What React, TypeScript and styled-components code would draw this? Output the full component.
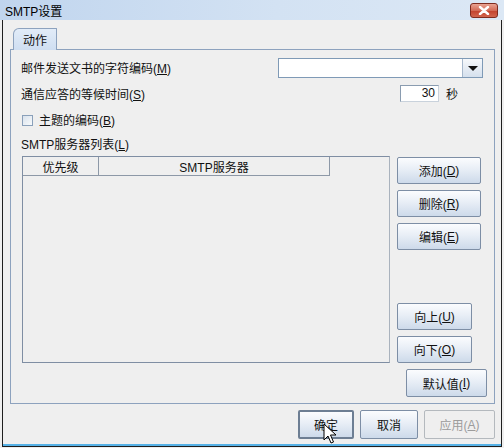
import styled, { createGlobalStyle } from 'styled-components';

const GlobalStyle = createGlobalStyle`
  html, body {
    margin: 0;
    padding: 0;
    background: #efefef;
  }
  body {
    font-family: "Liberation Sans", "Noto Sans CJK SC", sans-serif;
    font-size: 12px;
    color: #111;
  }
`;

const Window = styled.div`
  position: relative;
  width: 504px;
  height: 448px;
  display: flex;
  flex-direction: column;
  background: #efefef;
  overflow: hidden;
`;

const TitleBar = styled.div`
  height: 20px;
  flex: none;
  display: flex;
  align-items: center;
  justify-content: space-between;
  padding: 0 6px 0 5px;
  background: linear-gradient(to right, #c0d5ee, #d3e2f3 55%, #dce8f5);
`;

const Title = styled.span`
  font-size: 12px;
  color: #000;
`;

const CloseButton = styled.div`
  width: 28px;
  height: 15px;
  margin-top: 1px;
  box-sizing: border-box;
  border: 1px solid #7e2b1f;
  border-radius: 3px;
  background: linear-gradient(#e9a392, #d36b57 50%, #c2412c 51%, #d2654e);
  display: flex;
  align-items: center;
  justify-content: center;
`;

const Frame = styled.div`
  flex: 1;
  margin: 0 2px 1px 2px;
  border-left: 1px solid #1e1e1e;
  border-right: 1px solid #1e1e1e;
  border-bottom: 1px solid #1e1e1e;
  box-shadow: inset 0 -2px 0 #57b2e7;
  padding: 8px 6px 0 7px;
  display: flex;
  flex-direction: column;
`;

const TabStrip = styled.div`
  height: 21px;
  display: flex;
  padding-left: 3px;
`;

const Tab = styled.div`
  position: relative;
  z-index: 1;
  width: 44px;
  height: 22px;
  box-sizing: border-box;
  border: 1px solid #8da2be;
  border-bottom: none;
  border-radius: 6px 1px 0 0;
  background: linear-gradient(#e2ecf8, #cfdef1);
  display: flex;
  align-items: center;
  justify-content: center;
  font-size: 12px;
`;

const TabPanel = styled.div`
  height: 355px;
  box-sizing: border-box;
  border: 1px solid #8da2be;
  padding: 8px 11px 6px 10px;
  display: flex;
  flex-direction: column;
`;

const FormRow = styled.div<{ $h: number; $top?: number }>`
  height: ${p => p.$h}px;
  margin-top: ${p => p.$top ?? 0}px;
  display: flex;
  align-items: center;
  justify-content: space-between;
`;

const Label = styled.span`
  white-space: nowrap;
  line-height: 14px;
  padding-top: 2px;
`;

const Combo = styled.div`
  width: 205px;
  height: 20px;
  box-sizing: border-box;
  border: 1px solid #7f9ab6;
  background: #fff;
  display: flex;
  justify-content: flex-end;
`;

const ComboArrow = styled.div`
  width: 19px;
  border-left: 1px solid #a7b8cc;
  background: linear-gradient(#f6f8fb, #d5e0ed);
  display: flex;
  align-items: center;
  justify-content: center;
  &::after {
    content: '';
    border-left: 5px solid transparent;
    border-right: 5px solid transparent;
    border-top: 5px solid #111;
  }
`;

const FieldGroup = styled.div`
  display: flex;
  align-items: center;
  gap: 7px;
  margin-right: 25px;
`;

const NumberField = styled.div`
  width: 39px;
  height: 17px;
  box-sizing: border-box;
  border: 1px solid #8a9cb0;
  border-right-color: #c9d2dc;
  border-bottom-color: #c9d2dc;
  background: #fff;
  text-align: right;
  padding-right: 3px;
  line-height: 15px;
  font-size: 12px;
`;

const CheckRow = styled.div`
  height: 16px;
  margin-top: 10px;
  display: flex;
  align-items: center;
  gap: 6px;
  padding-left: 1px;
`;

const CheckBox = styled.div`
  width: 11px;
  height: 11px;
  box-sizing: border-box;
  border: 1px solid #8aa0ba;
  background: linear-gradient(135deg, #d9e2ec, #f8fafc);
`;

const ListArea = styled.div`
  display: flex;
  margin-top: 4px;
  gap: 7px;
  padding-left: 1px;
`;

const Table = styled.div`
  width: 368px;
  height: 207px;
  box-sizing: border-box;
  border: 1px solid #7f8ea3;
  border-right-color: #a9b2bd;
`;

const HeaderRow = styled.div`
  display: flex;
  height: 19px;
`;

const HeaderCell = styled.div<{ $w: number }>`
  width: ${p => p.$w}px;
  box-sizing: border-box;
  border-right: 1px solid #8d98a7;
  border-bottom: 1px solid #8d98a7;
  display: flex;
  align-items: center;
  justify-content: center;
  font-size: 12px;
`;

const SideButtons = styled.div`
  display: flex;
  flex-direction: column;
  justify-content: space-between;
  padding-top: 1px;
`;

const ButtonGroup = styled.div`
  display: flex;
  flex-direction: column;
  gap: 6px;
`;

const Button = styled.div<{ $w: number; $h?: number; $focus?: boolean; $disabled?: boolean }>`
  width: ${p => p.$w}px;
  height: ${p => p.$h ?? 27}px;
  box-sizing: border-box;
  border: ${p => (p.$focus ? '2px solid #6d7e93' : p.$disabled ? '1px solid #b4b9be' : '1px solid #7d8ea5')};
  border-radius: 2px;
  background: ${p => (p.$disabled ? '#efefef' : 'linear-gradient(#fbfcfe, #e8eef6 45%, #cddaea)')};
  color: ${p => (p.$disabled ? '#9c9c9c' : '#111')};
  display: flex;
  align-items: center;
  justify-content: center;
  font-size: 12px;
  white-space: nowrap;
`;

const DefaultRow = styled.div`
  display: flex;
  justify-content: flex-end;
  margin: 6px -4px 0 0;
`;

const Footer = styled.div`
  display: flex;
  justify-content: flex-end;
  gap: 6px;
  padding-top: 6px;
`;

const Cursor = styled.svg`
  position: absolute;
  left: 323px;
  top: 423px;
`;

export default function App() {
  return (
    <>
      <GlobalStyle />
      <Window>
        <TitleBar>
          <Title>SMTP设置</Title>
          <CloseButton>
            <svg width="12" height="9" viewBox="0 0 12 9">
              <path d="M2 1 L10 8 M10 1 L2 8" stroke="#fff" strokeWidth="2.4" strokeLinecap="round" />
            </svg>
          </CloseButton>
        </TitleBar>
        <Frame>
          <TabStrip>
            <Tab>动作</Tab>
          </TabStrip>
          <TabPanel>
            <FormRow $h={20}>
              <Label>邮件发送文书的字符编码(<u>M</u>)</Label>
              <Combo>
                <ComboArrow />
              </Combo>
            </FormRow>
            <FormRow $h={17} $top={7}>
              <Label>通信应答的等候时间(<u>S</u>)</Label>
              <FieldGroup>
                <NumberField>30</NumberField>
                <span>秒</span>
              </FieldGroup>
            </FormRow>
            <CheckRow>
              <CheckBox />
              <Label>主题的编码(<u>B</u>)</Label>
            </CheckRow>
            <FormRow $h={16} $top={8}>
              <Label>SMTP服务器列表(<u>L</u>)</Label>
            </FormRow>
            <ListArea>
              <Table>
                <HeaderRow>
                  <HeaderCell $w={76}>优先级</HeaderCell>
                  <HeaderCell $w={231}>SMTP服务器</HeaderCell>
                </HeaderRow>
              </Table>
              <SideButtons>
                <ButtonGroup>
                  <Button $w={84}>添加(<u>D</u>)</Button>
                  <Button $w={84}>删除(<u>R</u>)</Button>
                  <Button $w={84}>编辑(<u>E</u>)</Button>
                </ButtonGroup>
                <ButtonGroup>
                  <Button $w={75}>向上(<u>U</u>)</Button>
                  <Button $w={75}>向下(<u>O</u>)</Button>
                </ButtonGroup>
              </SideButtons>
            </ListArea>
            <DefaultRow>
              <Button $w={81} $h={28}>默认值(<u>I</u>)</Button>
            </DefaultRow>
          </TabPanel>
          <Footer>
            <Button $w={56} $h={29} $focus>确定</Button>
            <Button $w={58} $h={29}>取消</Button>
            <Button $w={71} $h={29} $disabled>应用(<u>A</u>)</Button>
          </Footer>
        </Frame>
        <Cursor width="14" height="22" viewBox="0 0 14 22">
          <path d="M1 1 L1 17 L5 13 L8 20 L10.5 19 L7.5 12 L13 12 Z" fill="#fff" stroke="#000" strokeWidth="1" strokeLinejoin="round" />
        </Cursor>
      </Window>
    </>
  );
}
